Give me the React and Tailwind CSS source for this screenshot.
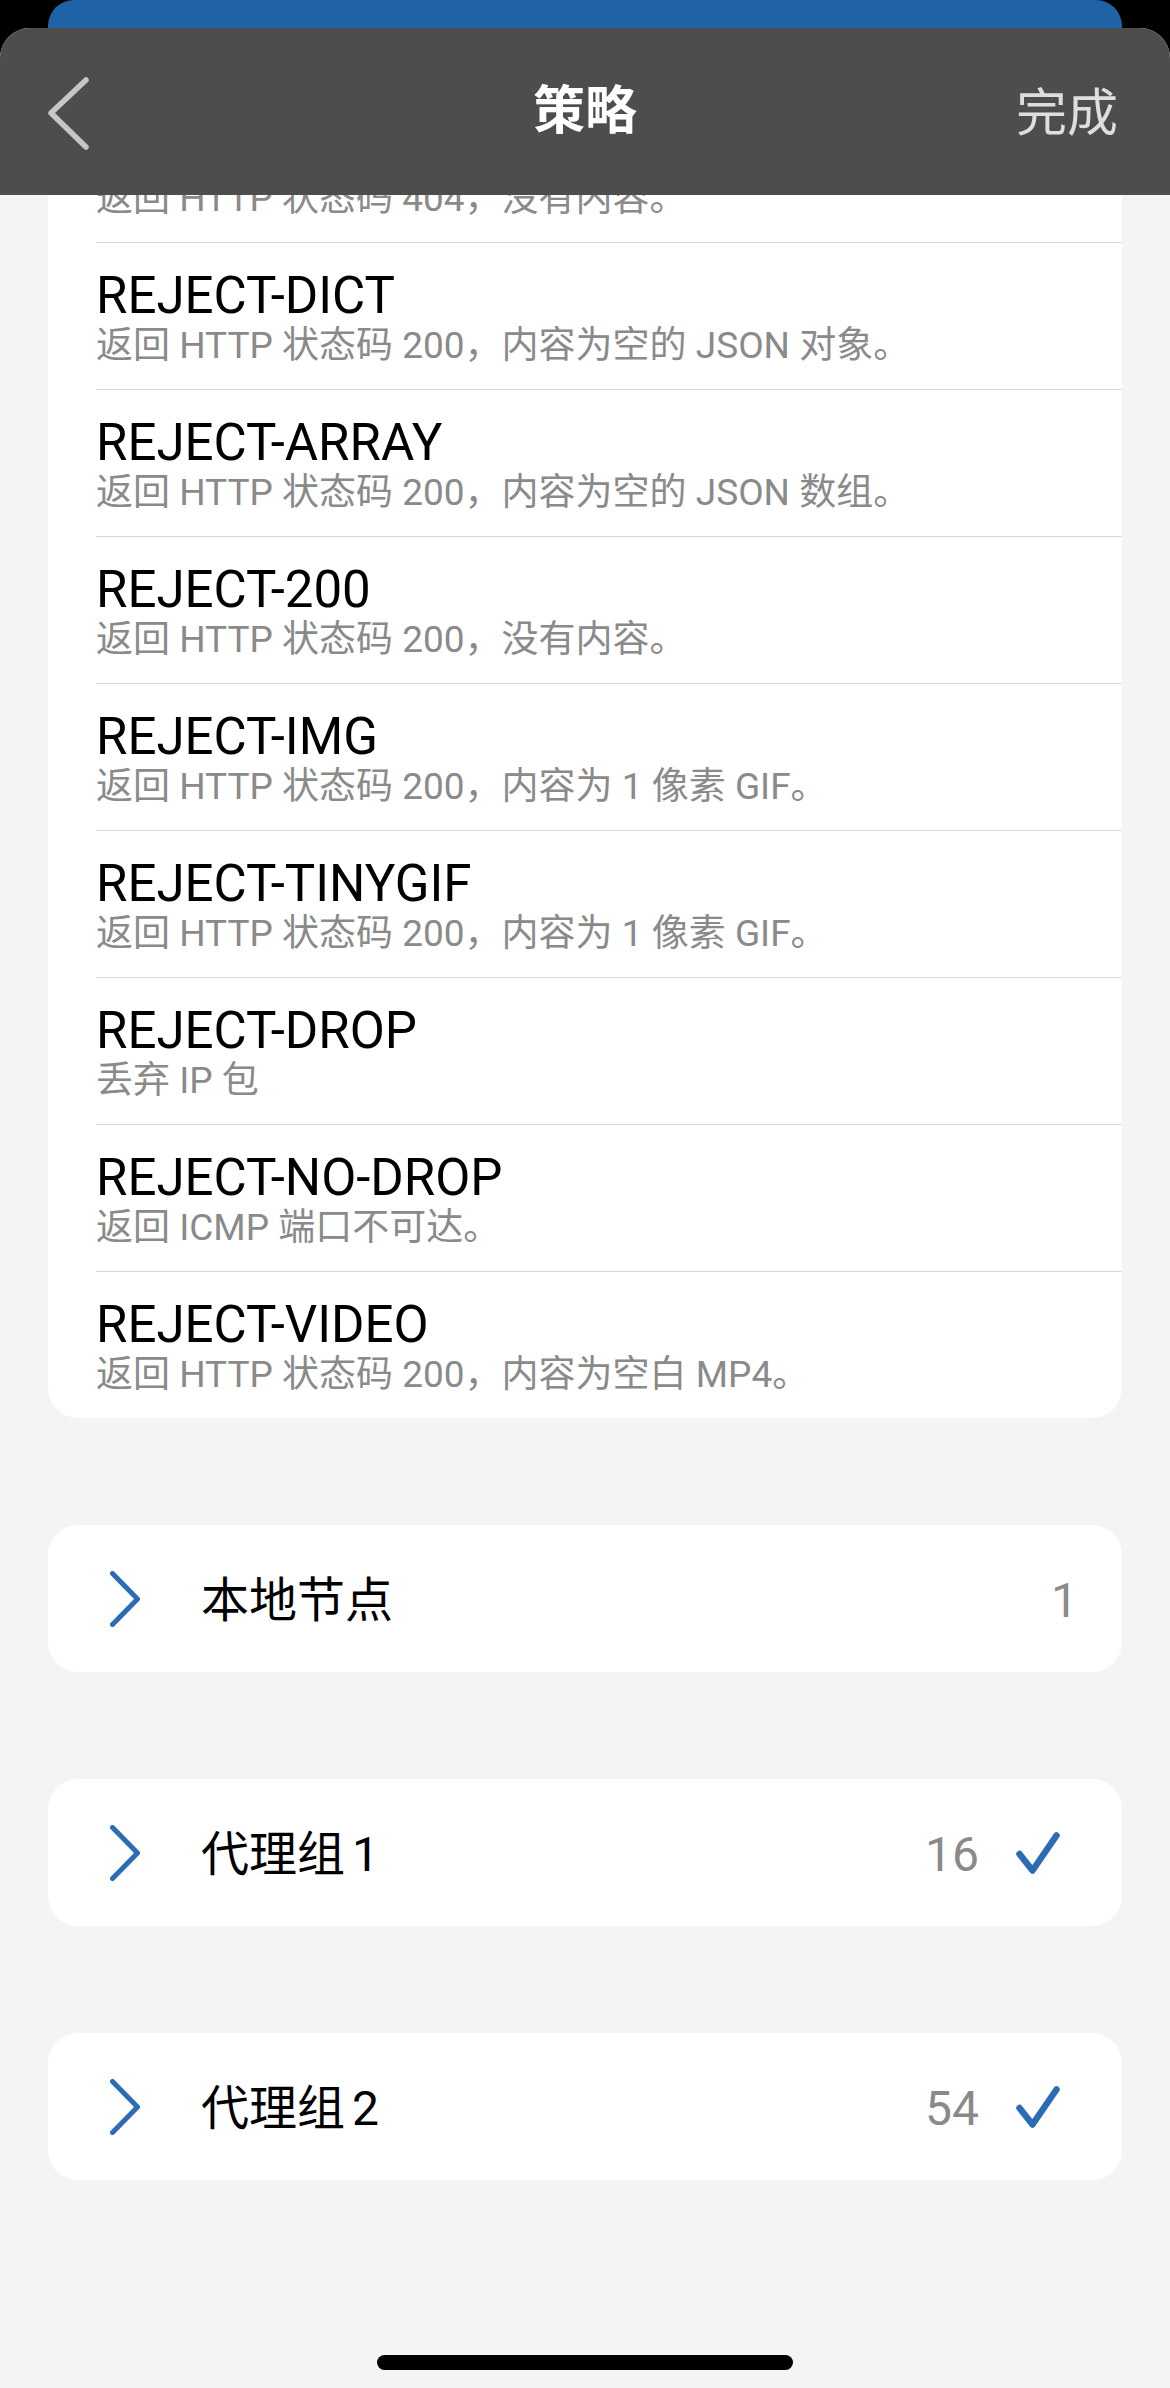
import React from 'react';

// 拒绝策略列表（第一项已被滚动到导航栏下方）
const rejectRules = [
  { name: 'REJECT', desc: '返回 HTTP 状态码 404，没有内容。' },
  { name: 'REJECT-DICT', desc: '返回 HTTP 状态码 200，内容为空的 JSON 对象。' },
  { name: 'REJECT-ARRAY', desc: '返回 HTTP 状态码 200，内容为空的 JSON 数组。' },
  { name: 'REJECT-200', desc: '返回 HTTP 状态码 200，没有内容。' },
  { name: 'REJECT-IMG', desc: '返回 HTTP 状态码 200，内容为 1 像素 GIF。' },
  { name: 'REJECT-TINYGIF', desc: '返回 HTTP 状态码 200，内容为 1 像素 GIF。' },
  { name: 'REJECT-DROP', desc: '丢弃 IP 包' },
  { name: 'REJECT-NO-DROP', desc: '返回 ICMP 端口不可达。' },
  { name: 'REJECT-VIDEO', desc: '返回 HTTP 状态码 200，内容为空白 MP4。' },
];

const groups = [
  { name: '本地节点', num: '', count: 1, checked: false },
  { name: '代理组', num: '1', count: 16, checked: true },
  { name: '代理组', num: '2', count: 54, checked: true },
];

function BackChevron() {
  return (
    <svg width="44" height="78" viewBox="0 0 44 78" fill="none">
      <path d="M40 6 L5 39 L40 73" stroke="#c6c6c6" strokeWidth="5.5" strokeLinecap="round" strokeLinejoin="round" />
    </svg>
  );
}

function ExpandChevron() {
  return (
    <svg width="30" height="56" viewBox="0 0 30 56" fill="none">
      <path d="M2.5 2.5 L27.5 28 L2.5 53.5" stroke="#2b6cb4" strokeWidth="5" strokeLinecap="round" strokeLinejoin="round" />
    </svg>
  );
}

function Check() {
  return (
    <svg width="44" height="42" viewBox="0 0 44 42" fill="none">
      <path d="M3.5 22 L16.5 38.5 L40.5 3.5" stroke="#2b6cb4" strokeWidth="6.5" strokeLinecap="round" strokeLinejoin="round" />
    </svg>
  );
}

function RuleRow({ rule, last }) {
  return (
    <div className="pl-[48px]">
      <div className={`pt-[25px] pb-[21px] ${last ? '' : 'border-b border-[#d9d9d9]'}`}>
        <div className="text-[51px] leading-[56px] text-black">{rule.name}</div>
        <div className="text-[37px] leading-[44px] text-[#8a8a8a]">{rule.desc}</div>
      </div>
    </div>
  );
}

function GroupCard({ group }) {
  return (
    <section className="mt-[107px] flex h-[147px] items-center rounded-[30px] bg-white pl-[62px]">
      <ExpandChevron />
      <div className="ml-[61px] flex-1 pt-[4px] text-[48px] leading-[56px] text-black">
        {group.name}
        {group.num && <span className="ml-[7px]">{group.num}</span>}
      </div>
      <div className={`flex items-center ${group.checked ? 'pr-[62px]' : 'pr-[44px]'}`}>
        <span className="pt-[4px] text-[48px] leading-[56px] text-[#8a8a8a]">{group.count}</span>
        {group.checked && (
          <span className="ml-[37px] flex">
            <Check />
          </span>
        )}
      </div>
    </section>
  );
}

export default function App() {
  return (
    <div className="flex h-[2388px] w-full flex-col overflow-hidden bg-black font-[Roboto,'Noto_Sans_CJK_SC',sans-serif]">
      {/* 后面那一层页面露出的蓝色边 */}
      <div className="h-[28px] shrink-0 px-[48px]">
        <div className="h-full rounded-t-[26px] bg-[#1f63a6]" />
      </div>

      <div className="flex min-h-0 flex-1 flex-col overflow-hidden rounded-t-[30px] bg-[#f4f4f4]">
        <header className="grid h-[167px] shrink-0 grid-cols-[1fr_auto_1fr] items-center bg-[#4d4d4d]">
          <div className="flex pl-[46px] pt-[2px]">
            <BackChevron />
          </div>
          <h1 className="pb-[10px] font-['Noto_Sans_CJK_SC',sans-serif] text-[52px] font-bold leading-none text-white">策略</h1>
          <div className="justify-self-end pb-[5px] pr-[52px] font-['Noto_Sans_CJK_SC',sans-serif] text-[51px] leading-none text-[#dedede]">完成</div>
        </header>

        <main className="min-h-0 flex-1 overflow-hidden px-[48px]">
          <section className="-mt-[99px] rounded-[30px] bg-white">
            {rejectRules.map((rule, i) => (
              <RuleRow key={rule.name} rule={rule} last={i === rejectRules.length - 1} />
            ))}
          </section>

          {groups.map((g) => (
            <GroupCard key={g.name + g.num} group={g} />
          ))}
        </main>

        <div className="flex shrink-0 justify-center pb-[18px]">
          <div className="h-[15px] w-[416px] rounded-full bg-black" />
        </div>
      </div>
    </div>
  );
}
